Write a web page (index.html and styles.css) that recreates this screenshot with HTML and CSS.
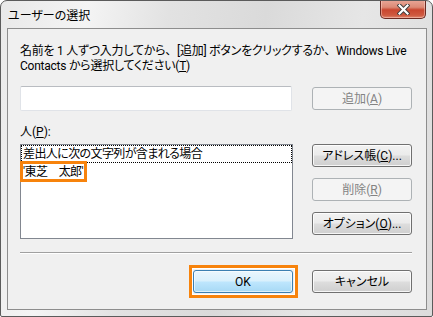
FILE: index.html
```html
<!DOCTYPE html>
<html lang="ja">
<head>
<meta charset="utf-8">
<title>ユーザーの選択</title>
<link rel="stylesheet" href="styles.css">
</head>
<body>
<div class="window">
  <div class="titlebar">
    <span class="title">ユーザーの選択</span>
    <div class="close">
      <svg width="13" height="11" viewBox="0 0 13 11">
        <path d="M2.5 1.5 L10.5 9.5 M10.5 1.5 L2.5 9.5" stroke="#3b3b3b" stroke-width="4" stroke-linecap="square" fill="none"/>
        <path d="M2.5 1.5 L10.5 9.5 M10.5 1.5 L2.5 9.5" stroke="#ffffff" stroke-width="2.2" stroke-linecap="square" fill="none"/>
      </svg>
    </div>
  </div>
  <div class="client">
    <div class="intro">
      <div class="line">名前を 1 人ずつ入力してから<span class="full">、</span>[追加] ボタンをクリックするか<span class="full">、</span>Windows Live</div>
      <div class="line">Contacts から選択してください(<u>T</u>)</div>
    </div>
    <div class="row-add">
      <div class="textbox"></div>
      <button class="btn disabled">追加(<u>A</u>)</button>
    </div>
    <div class="label">人(<u>P</u>):</div>
    <div class="row-list">
      <div class="listbox">
        <div class="item focus">差出人に次の文字列が含まれる場合</div>
        <div class="item"><span class="mark">'東芝　太郎'</span></div>
      </div>
      <div class="side">
        <button class="btn">アドレス帳(<u>C</u>)...</button>
        <button class="btn disabled">削除(<u>R</u>)</button>
        <button class="btn">オプション(<u>O</u>)...</button>
      </div>
    </div>
    <div class="sep"></div>
    <div class="footer">
      <button class="btn default mark-ok">OK</button>
      <button class="btn">キャンセル</button>
    </div>
  </div>
</div>
</body>
</html>
```

FILE: styles.css
```css
html, body {
  margin: 0;
  padding: 0;
  background: #ffffff;
}

.window {
  width: 433px;
  height: 317px;
  box-sizing: border-box;
  border: 1px solid #5b5b5b;
  border-radius: 7px 7px 2px 2px;
  background: linear-gradient(100deg, #e9e9e9 0%, #f4f4f4 18%, #e2e2e2 35%, #dadada 55%, #e6e6e6 75%, #dcdcdc 100%);
  display: flex;
  flex-direction: column;
  font-family: Roboto, "Noto Sans CJK JP", sans-serif;
  font-size: 12px;
  font-feature-settings: "palt";
  color: #000;
  overflow: hidden;
}

.titlebar {
  height: 27px;
  display: flex;
  justify-content: space-between;
  align-items: flex-start;
  padding: 0 6px 0 7px;
  flex: none;
}

.title {
  font-size: 12px;
  line-height: 14px;
  margin-top: 8px;
  color: #000;
}

.close {
  width: 46px;
  height: 19px;
  box-sizing: border-box;
  margin-top: -1px;
  border: 1px solid #6b2a22;
  border-top: none;
  border-radius: 0 0 5px 5px;
  background: linear-gradient(#e9a798 0%, #dc8a76 40%, #c9462f 55%, #cf5a40 85%, #e08870 100%);
  box-shadow: inset 0 0 0 1px rgba(255, 220, 210, 0.45);
  display: flex;
  align-items: center;
  justify-content: center;
}

.close svg {
  display: block;
  margin-top: 1px;
}

.client {
  flex: 1;
  margin: 0 5px 6px 6px;
  border: 1px solid #8d8d8d;
  background: #f0f0f0;
  padding: 15px 14px 0 12px;
  display: flex;
  flex-direction: column;
}

.intro {
  display: flex;
  flex-direction: column;
}

.intro .line {
  height: 15px;
  line-height: 15px;
  white-space: nowrap;
  letter-spacing: -0.25px;
}

.full {
  font-feature-settings: normal;
}

u {
  text-decoration: underline;
  text-underline-offset: 1px;
}

.row-add {
  margin-top: 12px;
  display: flex;
  align-items: center;
  gap: 20px;
}

.textbox {
  width: 272px;
  height: 25px;
  box-sizing: border-box;
  background: #fff;
  border: 1px solid #e0e3e8;
  border-top-color: #b9bcc1;
  border-radius: 2px;
}

.label {
  margin-top: 14px;
  line-height: 15px;
}

.row-list {
  margin-top: 4px;
  display: flex;
  align-items: flex-start;
  gap: 19px;
}

.listbox {
  width: 273px;
  height: 95px;
  box-sizing: border-box;
  background: #fff;
  border: 1px solid #828790;
  display: flex;
  flex-direction: column;
}

.item {
  height: 18px;
  line-height: 18px;
  padding-left: 2px;
  box-sizing: border-box;
  white-space: nowrap;
  letter-spacing: -0.6px;
}

.item.focus {
  border: 1px dotted #000;
  line-height: 16px;
  padding-left: 1px;
}

.mark {
  position: relative;
  display: inline-block;
}

.mark::after {
  content: "";
  position: absolute;
  left: -3px;
  right: -4px;
  top: -2px;
  bottom: -1px;
  border: 3px solid #f7830c;
}

.side {
  display: flex;
  flex-direction: column;
  gap: 11px;
}

.btn {
  width: 100px;
  height: 23px;
  box-sizing: border-box;
  padding: 0;
  border: 1px solid #707070;
  border-radius: 3px;
  background: linear-gradient(#f2f2f2 0%, #ebebeb 48%, #dddddd 52%, #cfcfcf 100%);
  box-shadow: inset 0 0 0 1px rgba(255, 255, 255, 0.8);
  font-family: Roboto, "Noto Sans CJK JP", sans-serif;
  font-size: 12px;
  font-feature-settings: "palt";
  line-height: 1;
  color: #000;
  white-space: nowrap;
}

.btn.disabled {
  border-color: #adb2b5;
  background: #f4f4f4;
  box-shadow: none;
  color: #838383;
}

.btn.default {
  border-color: #3c7fb1;
  background: linear-gradient(#eaf6fd 0%, #d9f0fc 48%, #bee6fd 52%, #a7d9f5 100%);
  box-shadow: inset 0 0 0 1px rgba(255, 255, 255, 0.6);
}

.mark-ok {
  position: relative;
}

.mark-ok::after {
  content: "";
  position: absolute;
  left: -5px;
  right: -6px;
  top: -6px;
  bottom: -6px;
  border: 3px solid #f7830c;
  box-shadow: inset 0 0 0 1px #ffffff;
}

.sep {
  margin-top: 13px;
  height: 0;
  border-top: 1px solid #a0a0a0;
  border-bottom: 1px solid #ffffff;
}

.footer {
  margin-top: 16px;
  display: flex;
  justify-content: flex-end;
  gap: 19px;
}
```
